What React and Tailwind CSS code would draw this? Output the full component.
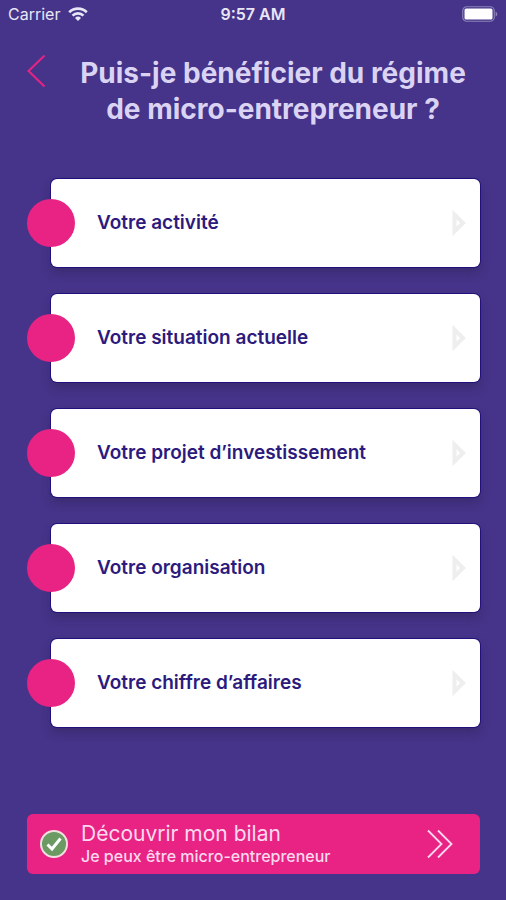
const steps = [
	{ id: 'activite', label: 'Votre activité' },
	{ id: 'situation', label: 'Votre situation actuelle' },
	{ id: 'projet', label: 'Votre projet d’investissement' },
	{ id: 'organisation', label: 'Votre organisation' },
	{ id: 'chiffre', label: 'Votre chiffre d’affaires' },
];

function WifiIcon() {
	return (
		<svg width="20" height="14" viewBox="0 0 20 14" fill="none" stroke="currentColor" strokeWidth="2.6" aria-hidden="true">
			<path d="M1.2 5.2a12.6 12.6 0 0 1 17.6 0" />
			<path d="M4.5 8.6a7.9 7.9 0 0 1 11 0" />
			<path d="M10 14 7 10.9a4.4 4.4 0 0 1 6 0z" fill="currentColor" stroke="none" />
		</svg>
	);
}

function BatteryIcon() {
	return (
		<svg width="36" height="16" viewBox="0 0 36 16" aria-hidden="true">
			<rect x="0.75" y="0.75" width="31.5" height="14.5" rx="4" fill="none" stroke="#8c83b8" strokeWidth="1.2" />
			<rect x="2.5" y="2.5" width="28" height="11" rx="1.5" fill="#fff" />
			<path d="M33.6 5.4c2.2.8 2.2 4.4 0 5.2z" fill="#8c83b8" />
		</svg>
	);
}

function StatusBar() {
	return (
		<div className="grid h-7 grid-cols-3 items-center pl-2 pr-2 text-base text-[#e9e6f5]">
			<div className="flex items-center gap-2">
				<span>Carrier</span>
				<WifiIcon />
			</div>
			<span className="text-center font-semibold">9:57 AM</span>
			<div className="flex justify-end">
				<BatteryIcon />
			</div>
		</div>
	);
}

function StepRow({ label }) {
	return (
		<li>
			<button type="button" className="flex w-full items-center text-left">
				<span className="z-10 -mr-6 size-12 shrink-0 rounded-full bg-[#e82384]" />
				<span className="flex h-[88px] min-w-0 flex-1 items-center justify-between rounded-md bg-white pl-[46px] pr-3 shadow-[0_0_0_1px_#24107c,0_6px_10px_rgba(40,30,70,0.35)]">
					<span className="text-[19px] font-semibold text-[#2c1a7d]">{label}</span>
					<svg width="18" height="26" viewBox="0 0 18 26" fill="none" aria-hidden="true">
						<path d="M4.5 4.5v17L13 13z" stroke="#eeeeee" strokeWidth="4" />
					</svg>
				</span>
			</button>
		</li>
	);
}

function App() {
	return (
		<div className="flex min-h-screen flex-col bg-[#453489] font-['Inter','Liberation_Sans',sans-serif]">
			<StatusBar />

			<header className="flex items-start pl-6 pr-2 pt-[27px]">
				<button type="button" aria-label="Retour" className="shrink-0">
					<svg width="24" height="34" viewBox="0 0 24 34" fill="none" stroke="#e82384" strokeWidth="2" aria-hidden="true">
						<path d="M20.5 0.5 4.5 16 20.5 31.5" />
					</svg>
				</button>
				<h1 className="flex-1 text-center text-[28px] leading-9 font-bold text-[#dad3f3]">
					Puis-je bénéficier du régime
					<br />
					de micro-entrepreneur ?
				</h1>
			</header>

			<main className="pl-[27px] pr-[26px] pt-[52px] pb-8">
				<ul className="flex flex-col gap-[27px]">
					{steps.map((step) => (
						<StepRow key={step.id} label={step.label} />
					))}
				</ul>
			</main>

			<footer className="mt-auto pb-[26px] pl-[27px] pr-[26px]">
				<button type="button" className="flex h-[60px] w-full items-center rounded-md bg-[#e82384] pl-3 pr-6 text-left text-[#fdd9ef]">
					<svg width="30" height="30" viewBox="0 0 30 30" aria-hidden="true">
						<circle cx="15" cy="15" r="13" fill="#6b9a62" stroke="#f1dfe0" strokeWidth="2" />
						<path d="M8.5 15.5 13 20 21.5 9.5" fill="none" stroke="#fff" strokeWidth="3" />
					</svg>
					<span className="ml-3 flex flex-1 flex-col">
						<span className="text-[21px] leading-6">Découvrir mon bilan</span>
						<span className="text-base leading-5 font-medium">Je peux être micro-entrepreneur</span>
					</span>
					<svg width="30" height="30" viewBox="0 0 30 30" fill="none" stroke="currentColor" strokeWidth="1.8" aria-hidden="true">
						<path d="M2 1.5 15.5 15 2 28.5" />
						<path d="M12 1.5 25.5 15 12 28.5" />
					</svg>
				</button>
			</footer>
		</div>
	);
}

export default App;
